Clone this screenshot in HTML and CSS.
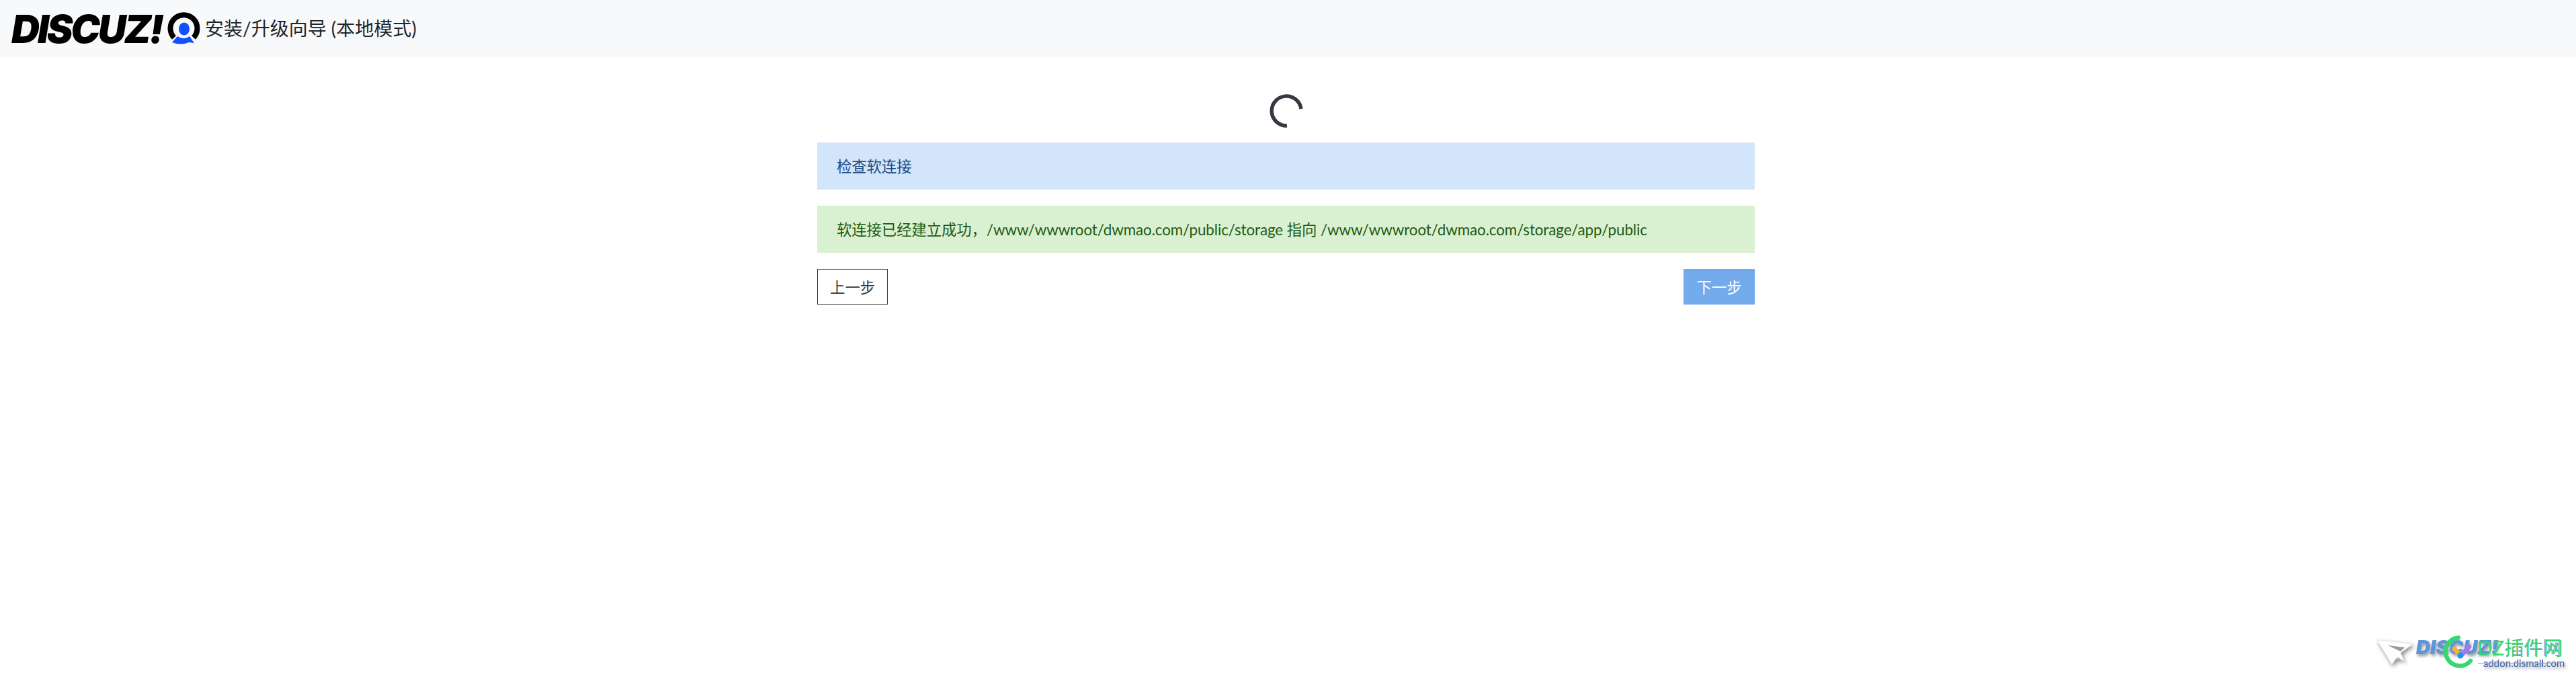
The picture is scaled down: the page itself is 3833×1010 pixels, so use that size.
FILE: index.html
```html
<!DOCTYPE html>
<html lang="zh-CN">
  <head>
    <meta charset="UTF-8" />
    <title>安装/升级向导</title>
    <link rel="stylesheet" href="styles.css">
  </head>

  <body>
    <div class="header">
      <span class="brand">DISCUZ!</span>
      <svg class="brand-icon" viewBox="0 0 50 50" width="50" height="50">
        <path d="M10 38 A20 20 0 1 1 39 38" fill="none" stroke="#000" stroke-width="8" />
        <ellipse cx="25" cy="25" rx="8" ry="9.5" fill="#1450ff" />
        <path d="M7 45 L15 36 Q25 42 33 36 L40 46 L32 45 Q20 50 7 45 Z" fill="#1450ff" />
      </svg>
      <span class="header-title">安装/升级向导 (本地模式)</span>
    </div>

    <div class="page">
      <div class="main">
        <svg class="spinner" viewBox="0 0 50 50" width="50" height="50">
          <path d="M47 22 A22 22 0 1 0 26 47" fill="none" stroke="#343a40" stroke-width="5.5" />
        </svg>
        <div class="alert alert-info">检查软连接</div>
        <div class="alert alert-success">软连接已经建立成功，/www/wwwroot/dwmao.com/public/storage 指向 /www/wwwroot/dwmao.com/storage/app/public</div>
        <div class="buttons">
          <div class="btn btn-prev">上一步</div>
          <div class="btn btn-next">下一步</div>
        </div>
      </div>
    </div>

    <div class="watermark">
      <svg class="plane" viewBox="0 0 56 40" width="56" height="40">
        <path d="M0 2 L53 8 L35 21 L40 33 L30 28 L22 38 Z" fill="#fff" stroke="#e8e8e8" stroke-width="1" />
        <path d="M16 10 L41 13 L35 19 Z" fill="#9a9a9a" />
        <path d="M30 28 L25 33 L35 29 Z" fill="#bbb" />
      </svg>
      <span class="wm-logo">DISCUZ!</span>
      <span class="wm-cn">插件网</span>
      <span class="wm-url">addon.dismall.com</span>
      <div class="wm-line"></div>
      <svg class="wm-c" viewBox="0 0 50 50" width="50" height="50">
        <path d="M23 3.5 A21 21 0 1 0 41 38" fill="none" stroke="#36d76f" stroke-width="6.5" stroke-linecap="round" />
        <path d="M17 20 L26 30" stroke="#f3b23c" stroke-width="7" stroke-linecap="round" />
        <path d="M27 30 L39 17" stroke="#a078f0" stroke-width="7" stroke-linecap="round" />
        <circle cx="26" cy="30" r="4.5" fill="#1e90ff" />
      </svg>
      <span class="wm-dz"><span class="wm-dz-latin">DZ</span>插件网</span>
    </div>
  </body>
</html>
```

FILE: styles.css
```css
html,
body {
  height: 100%;
}

body {
  margin: 0;
  position: relative;
  overflow: hidden;
  background-color: #fff;
  color: #212529;
  font-family: "Lato", "Noto Sans CJK SC", sans-serif;
  font-size: 22.4px;
}

.header {
  display: flex;
  align-items: center;
  height: 85px;
  padding-left: 17px;
  background-color: #f8f9fa;
}

.brand {
  font-family: "Inter", sans-serif;
  font-size: 58px;
  font-weight: 900;
  font-style: italic;
  color: #000;
  letter-spacing: -3px;
}

.brand-icon {
  margin-left: 8px;
}

.header-title {
  margin-left: 6px;
  padding-bottom: 3px;
  font-size: 28px;
  color: #212529;
}

.page {
  padding-right: 6px;
}

.main {
  display: flex;
  flex-direction: column;
  width: 1395px;
  margin: 0 auto;
}

.spinner {
  align-self: center;
  margin: 55px 0 22px;
}

.alert {
  display: flex;
  align-items: center;
  box-sizing: border-box;
  height: 70px;
  margin-bottom: 24px;
  padding: 0 29px 3px;
  letter-spacing: -0.1px;
}

.alert-info {
  background-color: #d3e5fb;
  color: #1e4b85;
}

.alert-success {
  background-color: #d9f0d1;
  color: #1f5a14;
}

.buttons {
  display: flex;
  justify-content: space-between;
}

.btn {
  display: flex;
  align-items: center;
  justify-content: center;
  box-sizing: border-box;
  height: 53px;
  padding-bottom: 2px;
}

.btn-prev {
  padding-left: 18px;
  padding-right: 18px;
  border: 1px solid #343a40;
  color: #343a40;
}

.btn-next {
  padding-left: 19.4px;
  padding-right: 19.4px;
  background-color: #72aaec;
  color: #fff;
}

.watermark {
  position: absolute;
  right: 0;
  bottom: 0;
  width: 300px;
  height: 90px;
}

.plane {
  position: absolute;
  left: 4px;
  top: 30px;
  filter: drop-shadow(2px 3px 3px #888);
}

.wm-logo {
  position: absolute;
  left: 62px;
  top: 25px;
  font-family: "Inter", sans-serif;
  font-size: 29px;
  font-weight: 900;
  font-style: italic;
  color: #5b96da;
  filter: drop-shadow(2px 3px 2px #999);
}

.wm-cn {
  position: absolute;
  left: 194px;
  top: 27px;
  font-size: 28px;
  line-height: 32px;
  color: #8fb4e2;
}

.wm-url {
  position: absolute;
  left: 162px;
  top: 56px;
  font-size: 15px;
  line-height: 20px;
  color: #3b5ea8;
  filter: drop-shadow(2px 3px 2px #999);
}

.wm-line {
  position: absolute;
  left: 154px;
  top: 66px;
  width: 124px;
  height: 1px;
  background-color: #a78bf0;
}

.wm-c {
  position: absolute;
  left: 102px;
  top: 25px;
}

.wm-dz {
  position: absolute;
  left: 153px;
  top: 27px;
  font-size: 29px;
  line-height: 32px;
  color: #36d76f;
}

.wm-dz-latin {
  font-size: 30px;
}
```
